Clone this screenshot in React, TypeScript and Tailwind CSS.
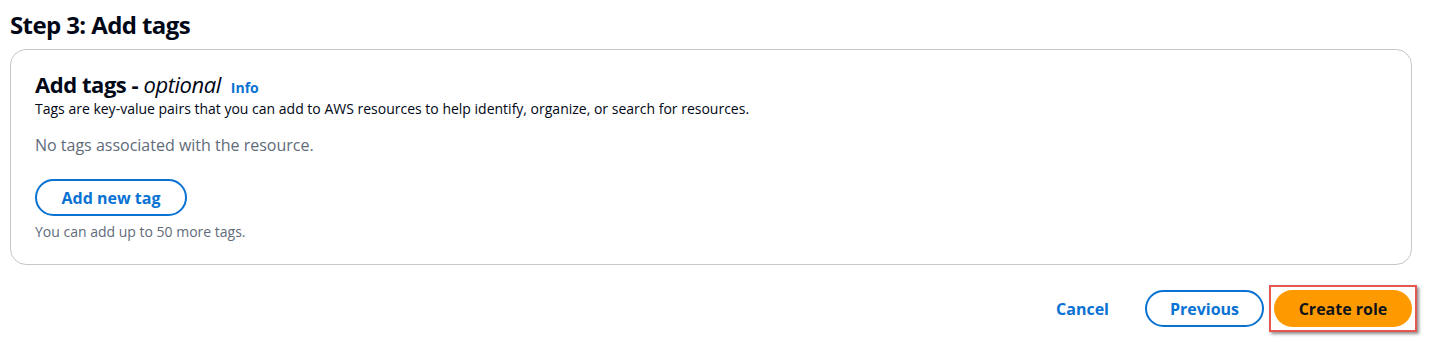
import React from 'react';

const App: React.FC = () => {
  return (
    <div className="w-[1432px] h-[355px] bg-white px-[10px] pt-[10px] text-[#000716]" style={{ fontFamily: '"Open Sans", "Noto Sans", sans-serif' }}>
      <h2 className="text-[24px] leading-[30px] font-bold tracking-[-0.6px]">Step 3: Add tags</h2>

      <div className="mt-[9px] w-[1402px] h-[216px] border border-[#c6c6cd] rounded-[16px] px-[24px] pt-[19px]">
        <div className="flex items-baseline gap-[10px]">
          <h3 className="text-[22px] leading-[30px] font-bold tracking-[-0.45px]">
            Add tags - <span className="italic font-normal">optional</span>
          </h3>
          <a className="text-[14px] font-bold text-[#0972d3]">Info</a>
        </div>
        <p className="text-[14px] leading-[20px] text-[#000716]">
          Tags are key-value pairs that you can add to AWS resources to help identify, organize, or search for resources.
        </p>

        <p className="mt-[14px] text-[16px] leading-[24px] text-[#5f6b7a]">No tags associated with the resource.</p>

        <button className="mt-[22px] w-[152px] h-[37px] rounded-full border-2 border-[#0972d3] text-[#0972d3] text-[16px] font-bold">
          Add new tag
        </button>
        <p className="mt-[6px] text-[14px] leading-[20px] text-[#5f6b7a]">You can add up to 50 more tags.</p>
      </div>

      <div className="flex justify-end items-center mt-[20px] pr-[5px]">
        <button className="text-[16px] font-bold text-[#0972d3] mr-[36px]">Cancel</button>
        <button className="w-[119px] h-[37px] rounded-full border-2 border-[#0972d3] text-[#0972d3] text-[16px] font-bold mr-[5px]">
          Previous
        </button>
        <div className="p-[3px] border-2 border-[#e8574f] shadow-[2px_2px_3px_rgba(0,0,0,0.45)]">
          <button className="w-[138px] h-[37px] rounded-full bg-[#ff9900] text-[#0f141a] text-[16px] font-bold">
            Create role
          </button>
        </div>
      </div>
    </div>
  );
};

export default App;
